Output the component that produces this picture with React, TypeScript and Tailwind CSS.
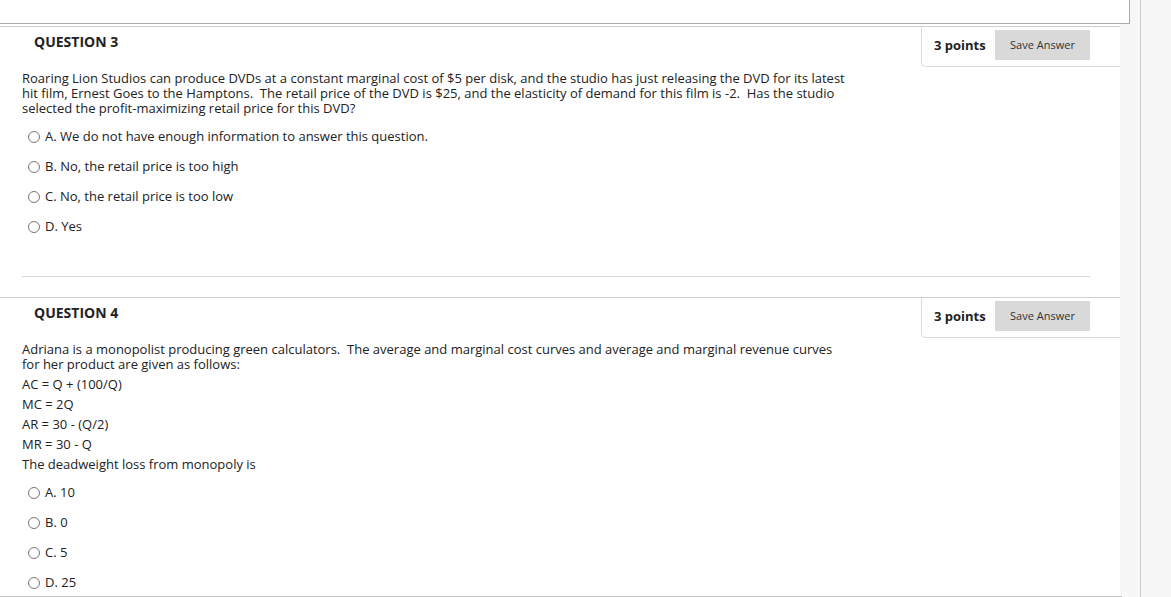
const Radio = () => (
    <span className="w-[12px] h-[12px] rounded-full border border-[#777] bg-white shrink-0" />
);

const Option = ({ label }: { label: string }) => (
    <div className="flex items-center h-[30px] pl-[28px] gap-[5px]">
        <Radio />
        <span>{label}</span>
    </div>
);

const QuestionHeader = ({ num }: { num: number }) => (
    <div className="flex border-t border-[#cfcfcf]">
        <div className="flex-1 pl-[34px] pt-[4px] text-[14px] font-bold">QUESTION {num}</div>
        <div className="w-[199px] h-[40px] border-l border-b border-[#d9d9d9] rounded-bl-[5px] flex items-start pt-[3px] pl-[12px]">
            <span className="text-[13px] font-bold w-[61px] leading-[30px]">3 points</span>
            <button className="w-[95px] h-[30px] bg-[#d9d9d9] text-[11px] text-[#333]">Save Answer</button>
        </div>
    </div>
);

export default function App() {
    return (
        <div
            className="flex h-[597px] overflow-hidden bg-white text-[13px] text-[#222] relative"
            style={{ fontFamily: '"Open Sans", "Noto Sans", sans-serif' }}
        >
            <div className="w-[1120px] shrink-0 bg-white">
                <div className="w-[1130px] h-[24px] border-b border-r border-[#ababab] bg-white relative z-10" />
                <div className="h-[2px]" />

                <QuestionHeader num={3} />
                <div className="pl-[22px] pt-[4px] w-[850px] leading-[15px]">
                    Roaring Lion Studios can produce DVDs at a constant marginal cost of $5 per disk, and the studio has just releasing the DVD for its latest hit film, Ernest Goes to the Hamptons.&nbsp; The retail price of the DVD is $25, and the elasticity of demand for this film is -2.&nbsp; Has the studio selected the profit-maximizing retail price for this DVD?
                </div>
                <div className="pt-[6px]">
                    <Option label="A. We do not have enough information to answer this question." />
                    <Option label="B. No, the retail price is too high" />
                    <Option label="C. No, the retail price is too low" />
                    <Option label="D. Yes" />
                </div>
                <div className="ml-[22px] w-[1068px] h-[35px] border-b border-[#d6d6d6]" />
                <div className="h-[20px]" />

                <QuestionHeader num={4} />
                <div className="pl-[22px] pt-[4px] w-[850px]">
                    <p className="leading-[15px] mb-[2px]">
                        Adriana is a monopolist producing green calculators.&nbsp; The average and marginal cost curves and average and marginal revenue curves for her product are given as follows:
                    </p>
                    <p className="leading-[20px]">AC = Q + (100/Q)</p>
                    <p className="leading-[20px]">MC = 2Q</p>
                    <p className="leading-[20px]">AR = 30 - (Q/2)</p>
                    <p className="leading-[20px]">MR = 30 - Q</p>
                    <p className="leading-[20px]">The deadweight loss from monopoly is</p>
                </div>
                <div className="pt-[4px]">
                    <Option label="A. 10" />
                    <Option label="B. 0" />
                    <Option label="C. 5" />
                    <Option label="D. 25" />
                </div>
            </div>
            <div className="flex-1 bg-[#f7f7f7] pl-[20px]">
                <div className="h-full border-l border-[#cccccc]" />
            </div>
            <div className="absolute left-0 bottom-0 w-[1122px] h-[1px] bg-[#c4c4c4] shadow-[0_-2px_4px_rgba(0,0,0,0.08)] z-20" />
        </div>
    );
}
